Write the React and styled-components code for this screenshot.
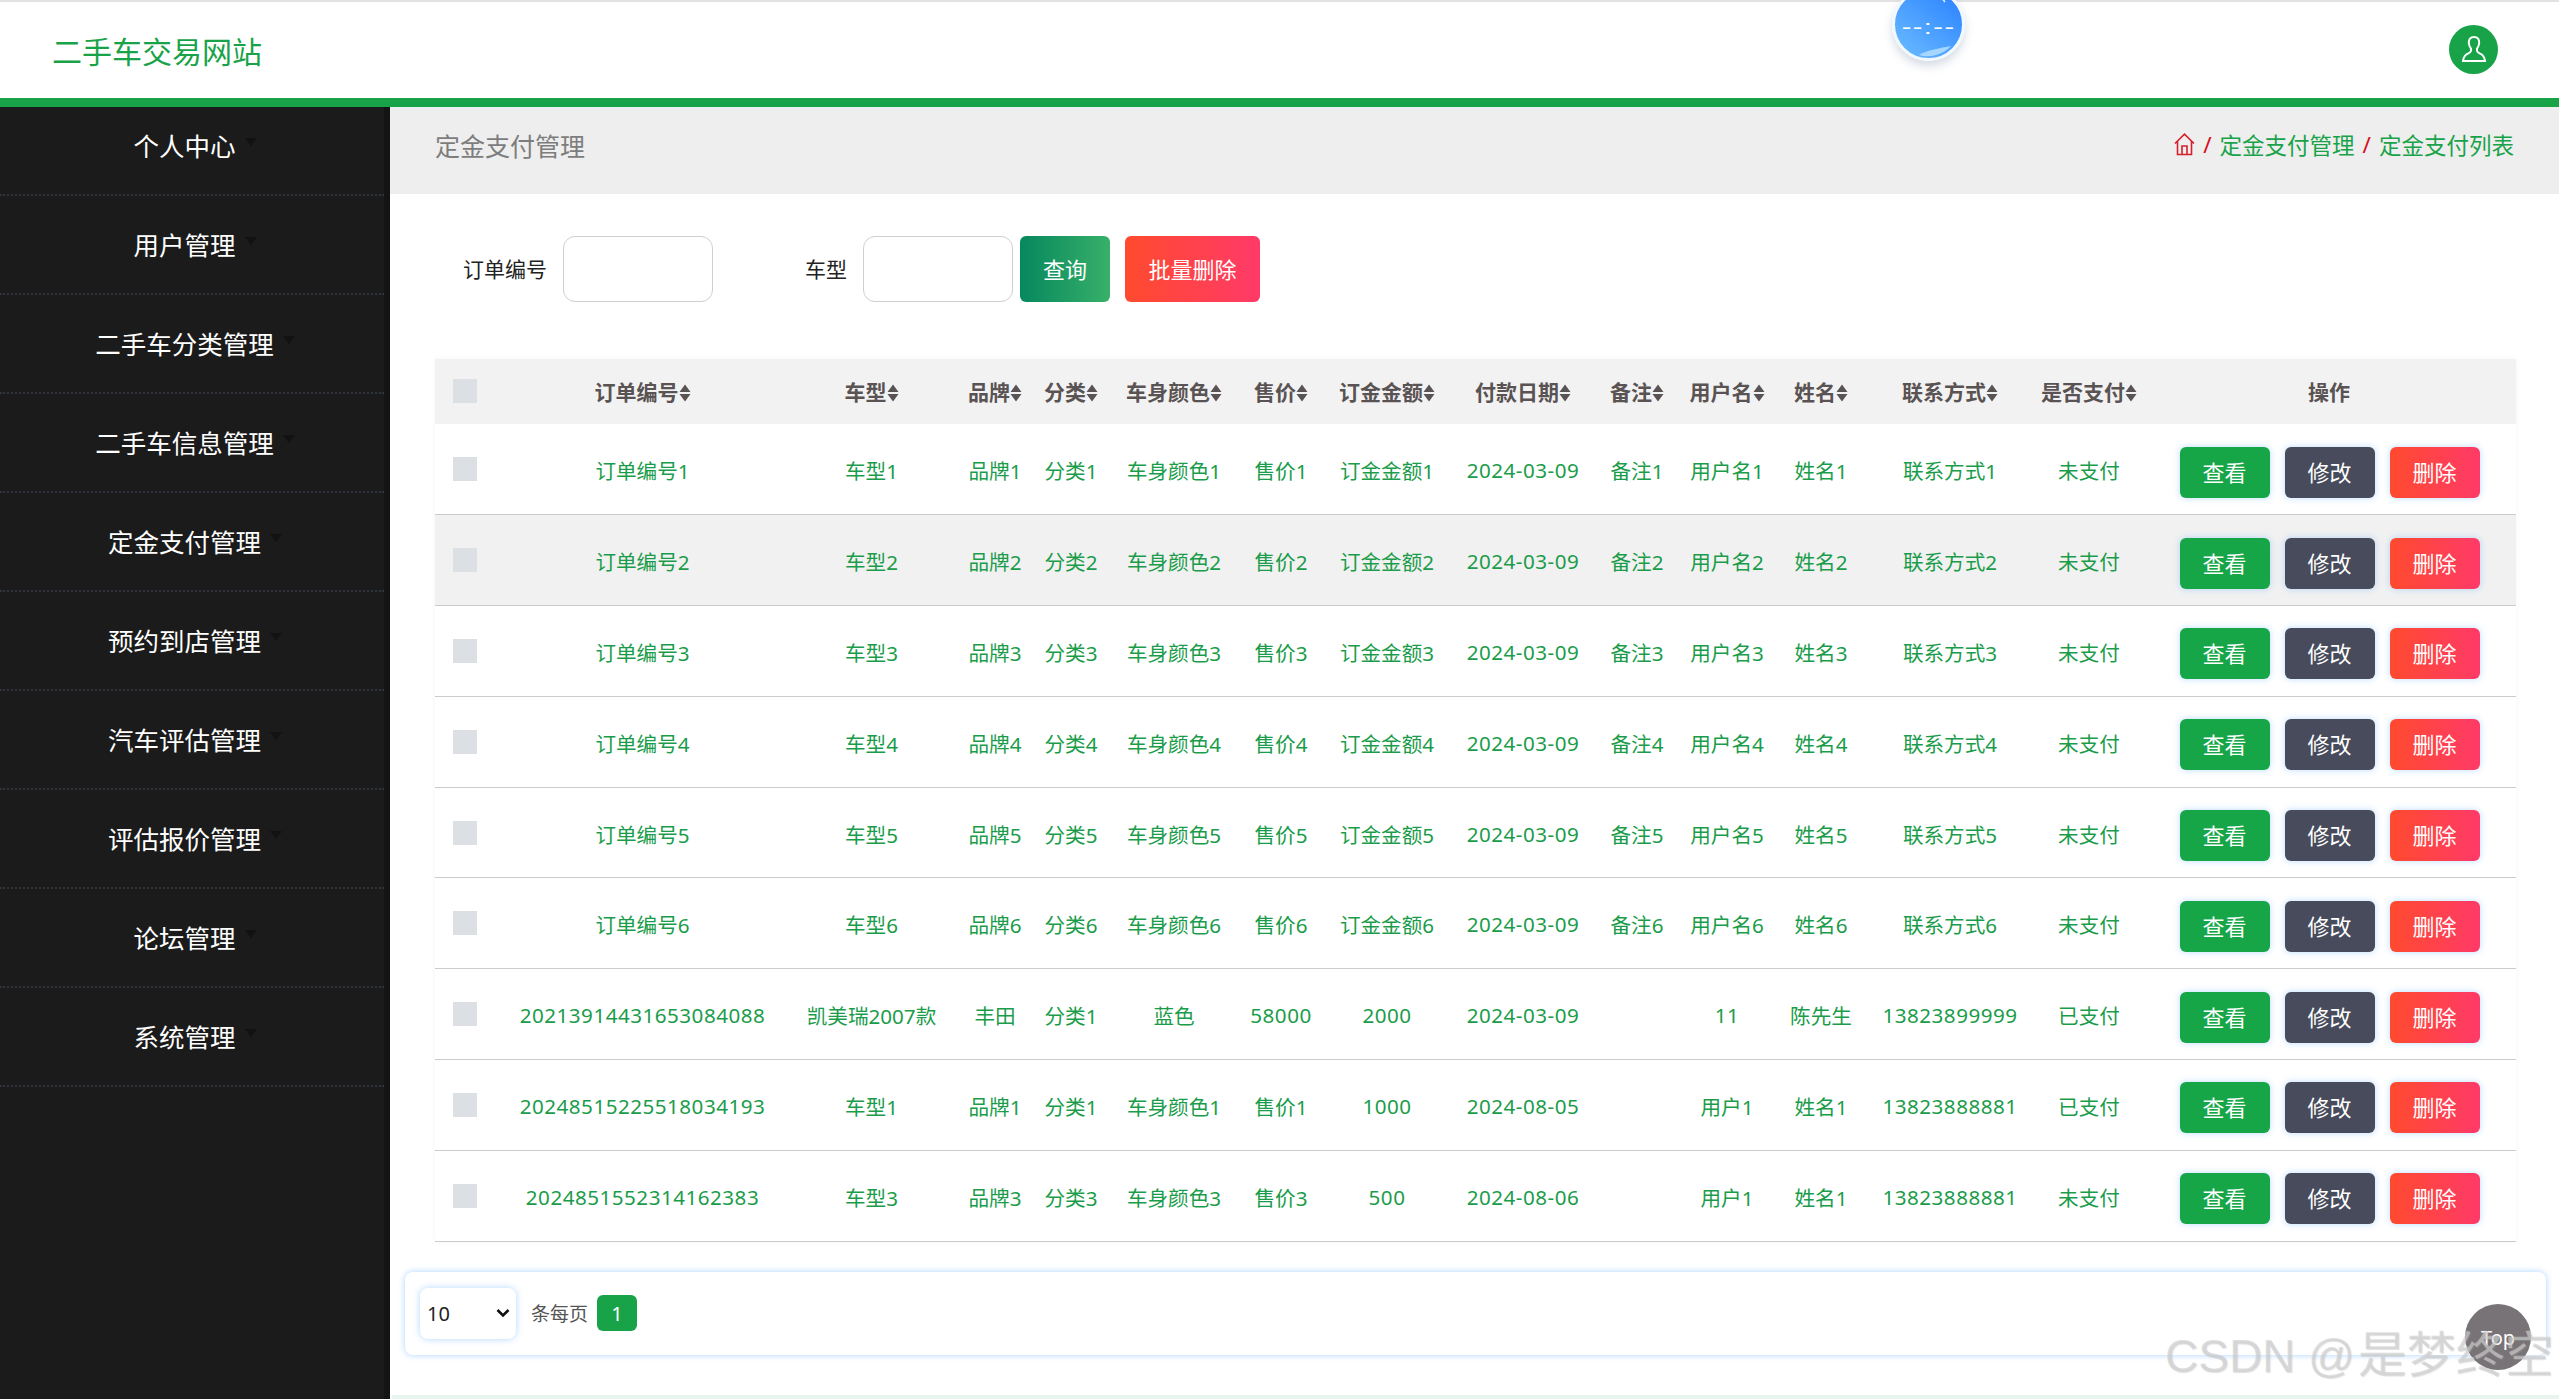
import React from "react";
import styled, { createGlobalStyle } from "styled-components";

const Global = createGlobalStyle`
  html, body { margin: 0; padding: 0; background: #fff; }
  body { font-family: "Noto Sans", "Noto Sans CJK SC", sans-serif; }
  * { box-sizing: border-box; }
`;
const Page = styled.div`
  position: relative; width: 2559px; height: 1399px; overflow: hidden;
  display: flex; flex-direction: column;
`;
const Header = styled.header`
  position: relative; z-index: 2; flex: none; height: 107px; background: #fff;
  border-top: 2px solid #e2e2e2; border-bottom: 9px solid #18a349;
  display: flex; align-items: center; justify-content: space-between;
  padding: 0 61px 0 52px;
`;
const Logo = styled.div`font-size: 30px; color: #18a349; line-height: 1; margin-top: 4px;`;
const Avatar = styled.div`
  width: 49px; height: 49px; border-radius: 50%; background: #18a349;
  display: flex; align-items: center; justify-content: center; margin-top: -2px;
`;
const Clock = styled.div`
  position: absolute; left: 1892px; top: -14px; width: 73px; height: 73px; border-radius: 50%;
  border: 3px solid #f1f8ff; overflow: hidden; color: #fff;
  background: linear-gradient(220deg, #2f86ff 10%, #62b4ff 85%);
  box-shadow: 0 5px 10px rgba(60, 90, 130, .22);
  display: flex; align-items: center; justify-content: center;
`;
const ClockText = styled.span`
  font-family: "Liberation Sans", sans-serif; font-size: 20px; letter-spacing: 1px; line-height: 1;
  transform: scaleX(1.45); margin-top: 4px;
`;
const ClockShine = styled.svg`position: absolute; inset: 0; width: 100%; height: 100%;`;
const Body = styled.div`flex: 1; min-height: 0; display: grid; grid-template-columns: 390px 1fr;`;
const Side = styled.nav`
  background: #1b1b1b; border-right: 6px solid #141414; margin-top: -10px;
`;
const SideItem = styled.div`
  height: 99px; border-bottom: 2px dotted #2f343a; color: #fff; font-size: 25.5px;
  display: flex; align-items: center; justify-content: center; padding: 0 0 3px 6px;
  &::after {
    content: ""; margin: 0 0 4px 9px; border-style: solid; border-width: 8px 6px 0 6px;
    border-color: #121212 transparent transparent transparent;
  }
`;
const Main = styled.main`display: flex; flex-direction: column; min-width: 0;`;
const Crumbs = styled.div`
  flex: none; height: 87px; background: #eee; display: flex; align-items: center;
  justify-content: space-between; padding: 0 45px 12px;
`;
const CrumbTitle = styled.div`font-size: 25px; color: #7d7d7d;`;
const CrumbPath = styled.div`display: flex; align-items: center; font-size: 22.5px; color: #18a349; gap: 8px;`;
const Slash = styled.span`color: #d5101c;`;
const Content = styled.div`padding: 42px 43px 0 45px;`;
const Filter = styled.form`display: flex; align-items: center; padding-left: 28px; height: 66px;`;
const FieldLabel = styled.label`font-size: 21px; color: #222; margin: 0 16px 3px 0;`;
const FieldInput = styled.input`
  width: 150px; height: 66px; border: 1px solid #cfcfcf; border-radius: 12px; background: #fff;
  margin-right: ${p => p.$gap}px;
`;
const ActionBtn = styled.button`
  height: 66px; width: ${p => p.$w}px; margin-right: 15px; border: 0; border-radius: 6px; color: #fff;
  font-family: inherit; font-size: 22px; padding: 0 0 3px;
  background: ${p => p.$bg};
`;
const Table = styled.table`
  width: 2081px; margin-top: 57px; border-collapse: collapse; table-layout: fixed;
  box-shadow: 0 0 6px rgba(0,0,0,.04);
`;
const Th = styled.th`
  height: 65px; padding: 0 0 1px; background: #f2f2f2; color: #5a5353; font-size: 21px; font-weight: 700;
  text-align: center; white-space: nowrap;
  &:first-child { text-align: left; padding-left: 18px; }
`;
const Tr = styled.tr`
  height: 90.8px; border-bottom: 1px solid #cbcbcb;
  background: ${p => (p.$hover ? "#f1f1f1" : "#fff")};
`;
const Td = styled.td`
  padding: 2px 0 0; color: #1a9c4a; font-size: 20.6px; text-align: center; white-space: nowrap;
  letter-spacing: ${p => (p.$num ? ".5px" : "0")};
  &:first-child { text-align: left; padding-left: 18px; padding-top: 0; }
`;
const Check = styled.input.attrs({ type: "checkbox" })`
  appearance: none; display: block; margin: 0; width: 24px; height: 24px; background: #dce0e5;
`;
const Ops = styled.div`display: flex; justify-content: center; gap: 15px; padding: 4px 0 0 1px;`;
const OpBtn = styled.button`
  width: 90px; height: 51px; border: 0; border-radius: 6px; color: #fff; padding: 0 0 3px;
  font-family: inherit; font-size: 22px; background: ${p => p.$bg};
  box-shadow: 0 0 7px rgba(64, 158, 255, .35);
`;
const Pager = styled.div`
  position: relative; margin: 30px -30px 0 -30px; height: 83px; border-radius: 8px; background: #fff;
  box-shadow: 0 0 6px rgba(64, 158, 255, .45); display: flex; align-items: center; padding-left: 15px;
`;
const SelectWrap = styled.div`position: relative; width: 96px; height: 51px; margin-right: 15px;`;
const SizeSelect = styled.select`
  appearance: none; display: block; width: 100%; height: 100%; border: 0; border-radius: 8px; background: #fff; color: #222;
  font-family: inherit; font-size: 20px; padding-left: 7px;
  box-shadow: 0 0 7px rgba(64, 158, 255, .4); outline: 0;
`;
const Chevron = styled.svg`position: absolute; right: 6px; top: 20px; pointer-events: none;`;
const PagerText = styled.span`font-size: 19px; color: #555; margin-right: 9px;`;
const PageNo = styled.span`
  width: 40px; height: 36px; border-radius: 6px; background: #18a349; color: #fff; font-size: 20px;
  display: flex; align-items: center; justify-content: center;
`;
const Strip = styled.div`flex: none; margin: auto 0 0 2px; height: 4px; background: #e8f5ee;`;
const TopBtn = styled.div`
  position: absolute; left: 2465px; top: 1304px; width: 66px; height: 66px; border-radius: 50%;
  background: #787376; color: #fff; font-size: 20px; display: flex; align-items: center;
  justify-content: center; z-index: 3;
`;
const Watermark = styled.div`
  position: absolute; left: 2165px; top: 1320px; z-index: 4; white-space: nowrap; pointer-events: none;
  font-family: "Liberation Sans", "Noto Sans CJK SC", sans-serif; font-size: 46px; line-height: 70px;
  color: rgba(205, 205, 205, .62); text-shadow: 1px 1px 1px rgba(170,170,170,.35);
`;
const WatermarkCjk = styled.span`font-size: 49px; margin-left: 3px;`;

const menu = ["个人中心", "用户管理", "二手车分类管理", "二手车信息管理", "定金支付管理", "预约到店管理", "汽车评估管理", "评估报价管理", "论坛管理", "系统管理"];
const cols = [
  ["", 67], ["订单编号", 281], ["车型", 177], ["品牌", 70], ["分类", 82], ["车身颜色", 124], ["售价", 90],
  ["订金金额", 122], ["付款日期", 150], ["备注", 78], ["用户名", 102], ["姓名", 86], ["联系方式", 172], ["是否支付", 106], ["操作", 374],
];
const sample = n => [`订单编号${n}`, `车型${n}`, `品牌${n}`, `分类${n}`, `车身颜色${n}`, `售价${n}`, `订金金额${n}`, "2024-03-09", `备注${n}`, `用户名${n}`, `姓名${n}`, `联系方式${n}`, "未支付"];
const rows = [
  ...[1, 2, 3, 4, 5, 6].map(sample),
  ["20213914431653084088", "凯美瑞2007款", "丰田", "分类1", "蓝色", "58000", "2000", "2024-03-09", "", "11", "陈先生", "13823899999", "已支付"],
  ["20248515225518034193", "车型1", "品牌1", "分类1", "车身颜色1", "售价1", "1000", "2024-08-05", "", "用户1", "姓名1", "13823888881", "已支付"],
  ["2024851552314162383", "车型3", "品牌3", "分类3", "车身颜色3", "售价3", "500", "2024-08-06", "", "用户1", "姓名1", "13823888881", "未支付"],
];
const isNum = v => /^[\d-]+$/.test(v);

const SortArrows = () => (
  <svg width="12" height="18" viewBox="0 0 12 18" style={{ verticalAlign: "-2px" }}>
    <path d="M6 0.500 11.500 8H0.500ZM6 17.500 0.500 10H11.500Z" fill="#5a5353" />
  </svg>
);
const UserIcon = () => (
  <svg width="26" height="28" viewBox="0 0 26 28" fill="none" stroke="#fff" strokeWidth="2">
    <path d="M13 2c-3.600 0-5.500 2.600-5.200 6 .2 2.400 1 4.200 2.200 5.600v2.200c0 1.200-1 1.800-2.600 2.500C4.500 19.500 2.500 21 2 26h22c-.5-5-2.500-6.500-5.400-7.700-1.600-.7-2.600-1.300-2.600-2.500v-2.200c1.200-1.400 2-3.200 2.200-5.600.3-3.400-1.600-6-5.200-6Z" />
  </svg>
);
const HomeIcon = () => (
  <svg width="21" height="23" viewBox="0 0 21 23" fill="none" stroke="#d5202c" strokeWidth="1.600">
    <path d="M1 10.500 10.500 1.200 20 10.500M3.500 8.500V21.500H17.500V8.500M8 21.500V13H13V21.500" />
  </svg>
);

const green = "#16a648";
const red = "linear-gradient(90deg, #ff4a2e, #ff3a68)";

export default function App() {
  return (
    <Page>
      <Global />
      <Header>
        <Logo>二手车交易网站</Logo>
        <Clock>
          <ClockText>--:--</ClockText>
          <ClockShine viewBox="0 0 67 67" fill="none">
            <path d="M40 4c5 1.500 8 4 10 7" stroke="#d8ecff" strokeWidth="1.500" />
            <path d="M24 64c8-5 22-7 32-9-6 7-20 13-32 9Z" fill="#a4d6ff" />
          </ClockShine>
        </Clock>
        <Avatar><UserIcon /></Avatar>
      </Header>
      <Body>
        <Side>
          {menu.map(m => <SideItem key={m}>{m}</SideItem>)}
        </Side>
        <Main>
          <Crumbs>
            <CrumbTitle>定金支付管理</CrumbTitle>
            <CrumbPath>
              <HomeIcon /><Slash>/</Slash><span>定金支付管理</span><Slash>/</Slash><span>定金支付列表</span>
            </CrumbPath>
          </Crumbs>
          <Content>
            <Filter>
              <FieldLabel>订单编号</FieldLabel>
              <FieldInput $gap={92} />
              <FieldLabel>车型</FieldLabel>
              <FieldInput $gap={7} />
              <ActionBtn type="button" $w={90} $bg="linear-gradient(90deg, #06885e, #38b06a)">查询</ActionBtn>
              <ActionBtn type="button" $w={135} $bg={red}>批量删除</ActionBtn>
            </Filter>
            <Table>
              <colgroup>{cols.map(([, w], i) => <col key={i} style={{ width: w }} />)}</colgroup>
              <thead>
                <tr>
                  <Th><Check /></Th>
                  {cols.slice(1).map(([name]) => (
                    <Th key={name}>{name}{name !== "操作" && <SortArrows />}</Th>
                  ))}
                </tr>
              </thead>
              <tbody>
                {rows.map((r, i) => (
                  <Tr key={i} $hover={i === 1}>
                    <Td><Check /></Td>
                    {r.map((c, j) => <Td key={j} $num={isNum(c)}>{c}</Td>)}
                    <Td>
                      <Ops>
                        <OpBtn $bg={green}>查看</OpBtn>
                        <OpBtn $bg="#474b5c">修改</OpBtn>
                        <OpBtn $bg={red}>删除</OpBtn>
                      </Ops>
                    </Td>
                  </Tr>
                ))}
              </tbody>
            </Table>
            <Pager>
              <SelectWrap>
                <SizeSelect defaultValue="10"><option>10</option><option>20</option></SizeSelect>
                <Chevron width="14" height="10" viewBox="0 0 14 10" fill="none" stroke="#111" strokeWidth="2.600">
                  <path d="M1.500 2 7 7.500 12.500 2" />
                </Chevron>
              </SelectWrap>
              <PagerText>条每页</PagerText>
              <PageNo>1</PageNo>
            </Pager>
          </Content>
          <Strip />
        </Main>
      </Body>
      <TopBtn>Top</TopBtn>
      <Watermark>CSDN @<WatermarkCjk>是梦终空</WatermarkCjk></Watermark>
    </Page>
  );
}
